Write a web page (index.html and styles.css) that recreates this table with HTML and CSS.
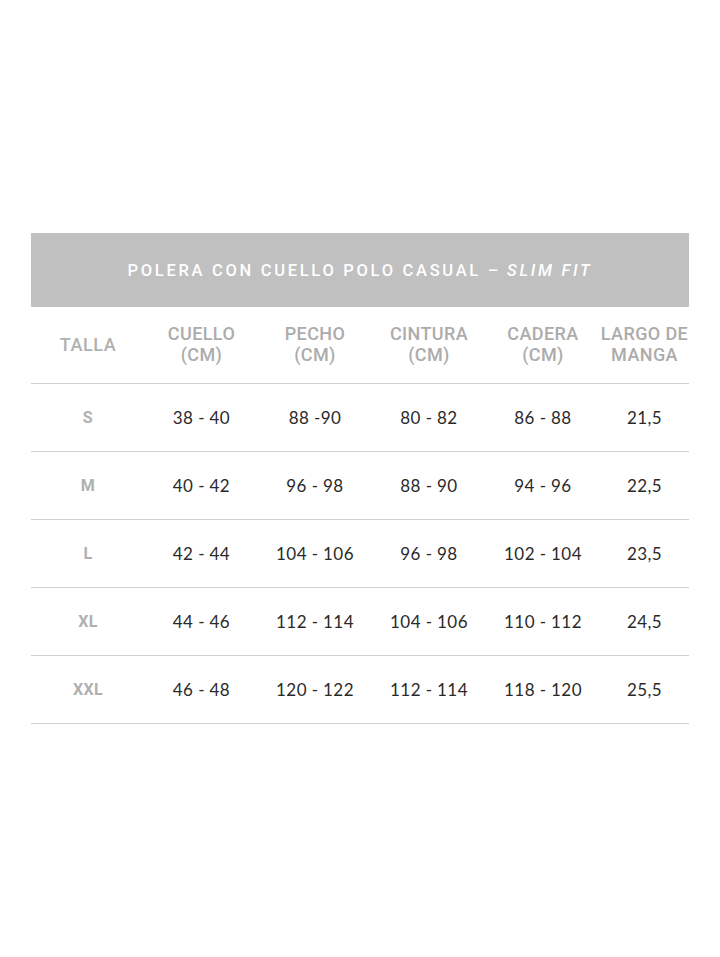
FILE: index.html
```html
<!DOCTYPE html>
<html lang="es">
<head>
<meta charset="utf-8">
<title>Tabla de tallas</title>
<link rel="stylesheet" href="styles.css">
</head>
<body>
<div class="chart">
  <div class="title">POLERA CON CUELLO POLO CASUAL – <em>SLIM FIT</em></div>
  <div class="row head">
    <div class="cell size">TALLA</div>
    <div class="cell">CUELLO<br>(CM)</div>
    <div class="cell">PECHO<br>(CM)</div>
    <div class="cell">CINTURA<br>(CM)</div>
    <div class="cell">CADERA<br>(CM)</div>
    <div class="cell">LARGO DE<br>MANGA</div>
  </div>
  <div class="row">
    <div class="cell size">S</div><div class="cell">38 - 40</div><div class="cell">88 -90</div><div class="cell">80 - 82</div><div class="cell">86 - 88</div><div class="cell">21,5</div>
  </div>
  <div class="row">
    <div class="cell size">M</div><div class="cell">40 - 42</div><div class="cell">96 - 98</div><div class="cell">88 - 90</div><div class="cell">94 - 96</div><div class="cell">22,5</div>
  </div>
  <div class="row">
    <div class="cell size">L</div><div class="cell">42 - 44</div><div class="cell">104 - 106</div><div class="cell">96 - 98</div><div class="cell">102 - 104</div><div class="cell">23,5</div>
  </div>
  <div class="row">
    <div class="cell size">XL</div><div class="cell">44 - 46</div><div class="cell">112 - 114</div><div class="cell">104 - 106</div><div class="cell">110 - 112</div><div class="cell">24,5</div>
  </div>
  <div class="row">
    <div class="cell size">XXL</div><div class="cell">46 - 48</div><div class="cell">120 - 122</div><div class="cell">112 - 114</div><div class="cell">118 - 120</div><div class="cell">25,5</div>
  </div>
</div>
</body>
</html>
```
FILE: styles.css
```css
html, body {
  margin: 0;
  padding: 0;
  background: #ffffff;
}
body {
  padding: 233px 31px 0 31px;
  font-family: "Lato", "Noto Sans", sans-serif;
}
.chart {
  width: 658px;
}
.title {
  height: 74px;
  background: #c0c0c0;
  color: #ffffff;
  display: flex;
  align-items: center;
  justify-content: center;
  font-family: "Roboto", "Noto Sans", sans-serif;
  font-weight: 500;
  font-size: 16.5px;
  letter-spacing: 2.7px;
  padding-top: 1px;
  box-sizing: border-box;
}
.title em {
  font-style: italic;
  margin-left: 6px;
}
.row {
  display: grid;
  grid-template-columns: 114px 113px 114px 114px 114px 89px;
  height: 68px;
  border-bottom: 1px solid #cfcfcf;
  box-sizing: border-box;
  align-items: center;
}
.row.head {
  height: 77px;
}
.cell {
  text-align: center;
  font-size: 17px;
  color: #2a2a2a;
  letter-spacing: 0.4px;
}
.head .cell {
  font-family: "Roboto", "Noto Sans", sans-serif;
  font-weight: 500;
  font-size: 18px;
  line-height: 21px;
  color: #acacac;
  letter-spacing: 0.4px;
  padding-bottom: 2px;
}
.cell.size {
  font-family: "Roboto", "Noto Sans", sans-serif;
  font-weight: 700;
  color: #b0b0b0;
  font-size: 16px;
}
.head .cell.size {
  font-weight: 500;
  font-size: 18px;
  letter-spacing: 0.6px;
}
```
